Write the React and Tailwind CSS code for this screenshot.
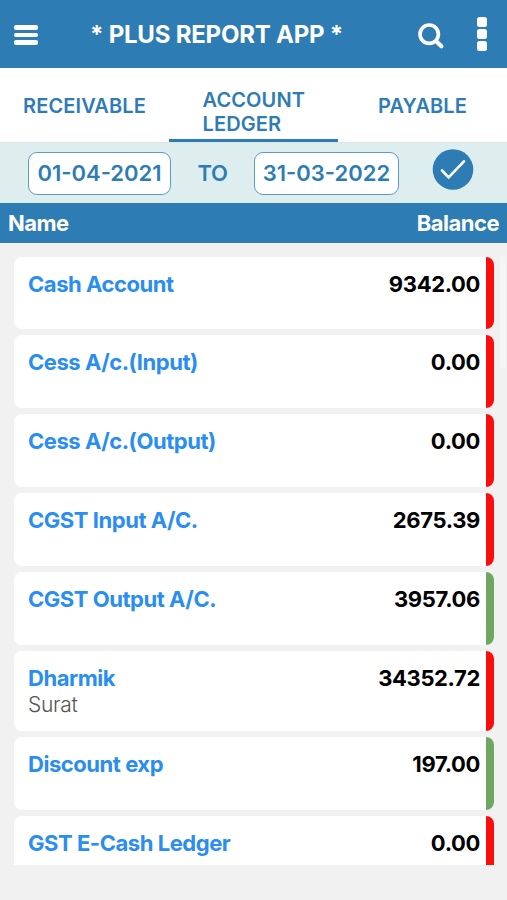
import React, { useState } from "react";
import clsx from "clsx";

const TABS = [
  { label: "RECEIVABLE", className: "pt-[5px]" },
  { label: "ACCOUNT LEDGER", className: "pt-4" },
  { label: "PAYABLE", className: "pt-[5px]" },
];

const ACCOUNTS = [
  { name: "Cash Account", balance: "9342.00", color: "red" },
  { name: "Cess A/c.(Input)", balance: "0.00", color: "red" },
  { name: "Cess A/c.(Output)", balance: "0.00", color: "red" },
  { name: "CGST Input A/C.", balance: "2675.39", color: "red" },
  { name: "CGST Output A/C.", balance: "3957.06", color: "green" },
  { name: "Dharmik", city: "Surat", balance: "34352.72", color: "red" },
  { name: "Discount exp", balance: "197.00", color: "green" },
  { name: "GST E-Cash Ledger", balance: "0.00", color: "red" },
];

const Header = () => (
  <header className="flex h-[68px] shrink-0 items-center bg-[#2e7cb4] text-white">
    <button className="ml-[14px] mt-[2px] flex w-6 flex-col gap-[3px]" aria-label="Menu">
      <span className="h-[5px] w-full rounded-[2px] bg-white" />
      <span className="h-[4px] w-full rounded-[2px] bg-white" />
      <span className="h-[5px] w-full rounded-[2px] bg-white" />
    </button>
    <h1 className="ml-[52px] mt-[2px] whitespace-nowrap text-[24px] font-[650] leading-7 tracking-[-0.22px]">
      * PLUS REPORT APP *
    </h1>
    <button className="ml-auto mt-1" aria-label="Search">
      <svg width="28" height="28" viewBox="0 0 28 28" fill="none" stroke="white" strokeLinecap="round">
        <circle cx="12.2" cy="12.2" r="9.2" strokeWidth="3.7" />
        <path d="M19.2 19.2L24.4 24.3" strokeWidth="4.2" />
      </svg>
    </button>
    <button className="ml-[32px] mr-5 flex w-[10px] flex-col gap-[2px]" aria-label="More">
      <span className="h-[10px] w-full rounded-[2.5px] bg-white" />
      <span className="h-[10px] w-full rounded-[2.5px] bg-white" />
      <span className="h-[10px] w-full rounded-[2.5px] bg-white" />
    </button>
  </header>
);

const Tabs = ({ active, onSelect }) => (
  <nav className="grid h-[75px] shrink-0 grid-cols-3 border-b border-[#d9e6e6] bg-white">
    {TABS.map((tab, i) => (
      <button
        key={tab.label}
        onClick={() => onSelect(i)}
        className={clsx(
          "flex items-center justify-center border-b-[3px] text-left text-[20px] font-[630] leading-6 tracking-[0.12px] text-[#2e7cb4]",
          active === i ? "border-[#2e7cb4]" : "border-transparent",
          tab.className
        )}
      >
        <span className={i === 1 ? "w-[102px]" : ""}>{tab.label}</span>
      </button>
    ))}
  </nav>
);

const DateRange = () => (
  <div className="flex h-[60px] shrink-0 items-center bg-[#deeeef] pl-7 text-[22px] font-[630] text-[#2e7cb4]">
    <div className="flex h-[43px] w-[143px] items-center justify-center rounded-[9px] border-[1.5px] border-[#5b9bca] bg-white">
      01-04-2021
    </div>
    <span className="w-[83px] text-center tracking-[-0.3px]">TO</span>
    <div className="flex h-[43px] w-[145px] items-center justify-center rounded-[9px] border-[1.5px] border-[#5b9bca] bg-white">
      31-03-2022
    </div>
    <button className="mb-[7px] ml-[33px]" aria-label="Apply">
      <svg width="42" height="42" viewBox="0 0 42 42" fill="none">
        <circle cx="21" cy="20.5" r="20.3" fill="#2e7cb4" />
        <path d="M10 21.5L16.6 28.3L32 12.3" stroke="white" strokeWidth="2.6" strokeLinecap="round" />
      </svg>
    </button>
  </div>
);

const AccountCard = ({ account }) => (
  <div
    className={clsx(
      "flex shrink-0 overflow-hidden rounded-lg bg-white",
      account.city ? "h-[80px]" : "h-[72.5px]"
    )}
  >
    <div className="flex-1 pl-[14px] pt-[13px]">
      <div className="flex justify-between pr-[6px] text-[22px] font-[650] leading-7">
        <span className="tracking-[-0.46px] text-[#2a8df0]">{account.name}</span>
        <span className="tracking-[-0.35px] text-black">{account.balance}</span>
      </div>
      {account.city && (
        <p className="text-[21px] font-light leading-[26px] tracking-[-0.3px] text-[#555]">{account.city}</p>
      )}
    </div>
    <div className={clsx("w-2", account.color === "red" ? "bg-[#fb0d0d]" : "bg-[#70a760]")} />
  </div>
);

const App = () => {
  const [activeTab, setActiveTab] = useState(1);

  return (
    <div className="flex h-[900px] w-[507px] flex-col overflow-hidden bg-[#f1f1f1] font-['Inter','Liberation_Sans',sans-serif]">
      <Header />
      <Tabs active={activeTab} onSelect={setActiveTab} />
      <DateRange />

      <div className="flex h-[40px] shrink-0 items-center justify-between bg-[#2e7cb4] px-2 text-[22px] font-[650] tracking-[-0.5px] text-white">
        <span>Name</span>
        <span>Balance</span>
      </div>

      {/* Ledger list */}
      <main className="flex h-[622px] shrink-0 overflow-hidden">
        <div className="flex flex-1 flex-col gap-[6.4px] pl-[14px] pt-[13.5px]">
          {ACCOUNTS.map((account) => (
            <AccountCard key={account.name} account={account} />
          ))}
        </div>
        {/* Scroll thumb */}
        <div className="ml-[6px] mr-[2px] mt-[13px] h-[112px] w-[5px] rounded-sm bg-[#f6f6f6]" />
      </main>
    </div>
  );
};

export default App;
